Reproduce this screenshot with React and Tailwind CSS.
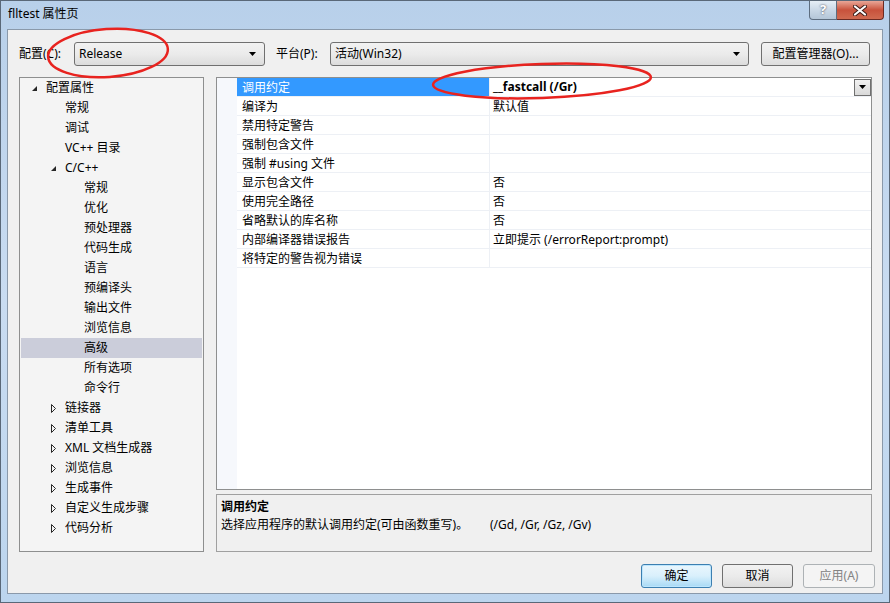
import React from "react";

const FONT = {
  fontFamily: '"Segoe UI", "Noto Sans", "Noto Sans CJK SC", sans-serif',
};

// tree rows: [label, level, state]  state: "open" | "closed" | null
const TREE = [
  ["配置属性", 0, "open"],
  ["常规", 1, null],
  ["调试", 1, null],
  ["VC++ 目录", 1, null],
  ["C/C++", 1, "open"],
  ["常规", 2, null],
  ["优化", 2, null],
  ["预处理器", 2, null],
  ["代码生成", 2, null],
  ["语言", 2, null],
  ["预编译头", 2, null],
  ["输出文件", 2, null],
  ["浏览信息", 2, null],
  ["高级", 2, null, true],
  ["所有选项", 2, null],
  ["命令行", 2, null],
  ["链接器", 1, "closed"],
  ["清单工具", 1, "closed"],
  ["XML 文档生成器", 1, "closed"],
  ["浏览信息", 1, "closed"],
  ["生成事件", 1, "closed"],
  ["自定义生成步骤", 1, "closed"],
  ["代码分析", 1, "closed"],
];

const PROPS = [
  ["调用约定", "__fastcall (/Gr)"],
  ["编译为", "默认值"],
  ["禁用特定警告", ""],
  ["强制包含文件", ""],
  ["强制 #using 文件", ""],
  ["显示包含文件", "否"],
  ["使用完全路径", "否"],
  ["省略默认的库名称", "否"],
  ["内部编译器错误报告", "立即提示 (/errorReport:prompt)"],
  ["将特定的警告视为错误", ""],
];

const Arrow = () => (
  <svg width="7" height="4" viewBox="0 0 7 4">
    <path d="M0 0 H7 L3.5 4 Z" fill="#000" />
  </svg>
);

const Combo = ({ value, className = "" }) => (
  <div
    className={`h-[24px] flex items-center justify-between pl-[4px] pr-[8px] rounded-[3px] border border-[#707070] bg-gradient-to-b from-[#f2f2f2] via-[#ebebeb] to-[#dcdcdc] ${className}`}
  >
    <span>{value}</span>
    <Arrow />
  </div>
);

const Btn = ({ children, kind = "normal", className = "" }) => {
  const styles = {
    normal:
      "border-[#707070] bg-gradient-to-b from-[#f2f2f2] via-[#ebebeb] to-[#dddddd] text-black",
    default:
      "border-[#3c7fb1] bg-gradient-to-b from-[#eaf6fd] via-[#d9f0fc] to-[#a7d9f5] text-black shadow-[inset_0_0_0_1px_#bde6fd]",
    disabled: "border-[#adb2b5] bg-[#f4f4f4] text-[#838383]",
  };
  return (
    <div
      className={`h-[24px] flex items-center justify-center rounded-[3px] border ${styles[kind]} ${className}`}
    >
      {children}
    </div>
  );
};

function TreeIcon({ state }) {
  if (state === "open")
    return (
      <svg width="7" height="7" viewBox="0 0 7 7">
        <path d="M6 1 V6 H1 Z" fill="#262626" />
      </svg>
    );
  if (state === "closed")
    return (
      <svg width="7" height="9" viewBox="0 0 7 9">
        <path d="M1.5 0.5 L5.5 4.5 L1.5 8.5 Z" fill="none" stroke="#262626" />
      </svg>
    );
  return null;
}

export default function App() {
  return (
    <div
      style={FONT}
      className="relative w-[890px] h-[603px] overflow-hidden text-[12px] text-black bg-gradient-to-b from-[#b8d0ea] via-[#c9dcf1] to-[#bcd5ee] border border-[#5a6878] flex flex-col"
    >
      {/* TITLE BAR */}
      <div className="h-[28px] flex items-start justify-between pl-[7px] pr-[5px]">
        <div className="mt-[5px] leading-[16px]">flltest 属性页</div>
        <div className="flex">
          <div className="w-[28px] h-[19px] rounded-bl-[4px] border border-t-0 border-[#5d6d7f] bg-gradient-to-b from-[#e6eef6] via-[#cad8e6] to-[#b4c6d8] flex items-center justify-center text-[13px] font-bold text-white [text-shadow:0_0_2px_#334]">
            ?
          </div>
          <div className="w-[47px] h-[19px] rounded-br-[4px] border border-l-0 border-t-0 border-[#6b2a22] bg-gradient-to-b from-[#e8a697] via-[#c8523c] to-[#d06a50] flex items-center justify-center">
            <svg width="14" height="11" viewBox="0 0 14 11">
              <path d="M2 1.5 L12 9.5 M12 1.5 L2 9.5" stroke="#3a1a16" strokeWidth="4" strokeLinecap="round" />
              <path d="M2 1.5 L12 9.5 M12 1.5 L2 9.5" stroke="#fff" strokeWidth="2.2" strokeLinecap="round" />
            </svg>
          </div>
        </div>
      </div>

      {/* CLIENT AREA */}
      <div className="flex-1 mx-[6px] mb-[8px] border border-[#8a99aa] bg-[#f0f0f0] flex flex-col">
        {/* config row */}
        <div className="flex items-center mt-[12px] ml-[11px] h-[24px]">
          <div className="w-[55px]">配置(C):</div>
          <Combo value="Release" className="w-[191px]" />
          <div className="w-[54px] ml-[11px]">平台(P):</div>
          <Combo value="活动(Win32)" className="w-[419px]" />
          <Btn className="w-[109px] ml-[12px]">配置管理器(O)...</Btn>
        </div>

        {/* main */}
        <div className="flex mt-[11px] ml-[11px]">
          {/* tree */}
          <div className="w-[185px] h-[475px] border border-[#8e8f8f] bg-[#f4f4f4] pl-[1px] pr-[1px]">
            {TREE.map(([label, level, state, sel], i) => (
              <div
                key={i}
                className={`h-[20px] flex items-center ${sel ? "bg-[#cbcdda]" : ""}`}
                style={{ paddingLeft: 10 + level * 19 }}
              >
                <div className="w-[15px] flex items-center">
                  <TreeIcon state={state} />
                </div>
                <span>{label}</span>
              </div>
            ))}
          </div>

          {/* right column */}
          <div className="w-[656px] ml-[12px] flex flex-col">
            <div className="h-[413px] border border-[#8e8f8f] bg-white flex">
              <div className="w-[20px] bg-[#f6f8fc]" />
              <div className="flex-1">
                {PROPS.map(([name, value], i) => (
                  <div
                    key={i}
                    className="h-[19px] flex border-b border-[#edf0f5]"
                  >
                    <div
                      className={`w-[253px] pl-[5px] pt-[1px] flex items-center border-r border-[#edf0f5] ${
                        i === 0 ? "bg-[#3399ff] text-white" : ""
                      }`}
                    >
                      {name}
                    </div>
                    <div
                      className={`flex-1 pl-[3px] flex items-center justify-between ${
                        i === 0 ? "font-bold" : "pt-[1px]"
                      }`}
                    >
                      <span>{value}</span>
                      {i === 0 && (
                        <div className="w-[17px] h-[17px] border border-[#707070] bg-gradient-to-b from-[#f2f2f2] to-[#d9d9d9] flex items-center justify-center">
                          <Arrow />
                        </div>
                      )}
                    </div>
                  </div>
                ))}
              </div>
            </div>

            <div className="h-[58px] mt-[4px] border border-[#a0a0a0] bg-[#f0f0f0] pl-[4px] pt-[3px]">
              <div className="font-bold leading-[18px]">调用约定</div>
              <div className="flex leading-[18px]">
                <span className="w-[269px]">选择应用程序的默认调用约定(可由函数重写)。</span>
                <span>(/Gd, /Gr, /Gz, /Gv)</span>
              </div>
            </div>
          </div>
        </div>

        {/* buttons */}
        <div className="flex justify-end mt-[12px] pr-[7px] gap-[10px]">
          <Btn kind="default" className="w-[71px]">确定</Btn>
          <Btn className="w-[71px]">取消</Btn>
          <Btn kind="disabled" className="w-[72px]">应用(A)</Btn>
        </div>
      </div>

      {/* red annotation circles */}
      <svg
        className="absolute left-0 top-0 pointer-events-none"
        width="890"
        height="603"
      >
        <ellipse cx="107" cy="52" rx="60" ry="24" fill="none" stroke="#e8231f" strokeWidth="2.5" transform="rotate(-4 107 52)" />
        <ellipse cx="541" cy="80" rx="109" ry="17" fill="none" stroke="#e8231f" strokeWidth="2.5" transform="rotate(-2 541 80)" />
      </svg>
    </div>
  );
}
